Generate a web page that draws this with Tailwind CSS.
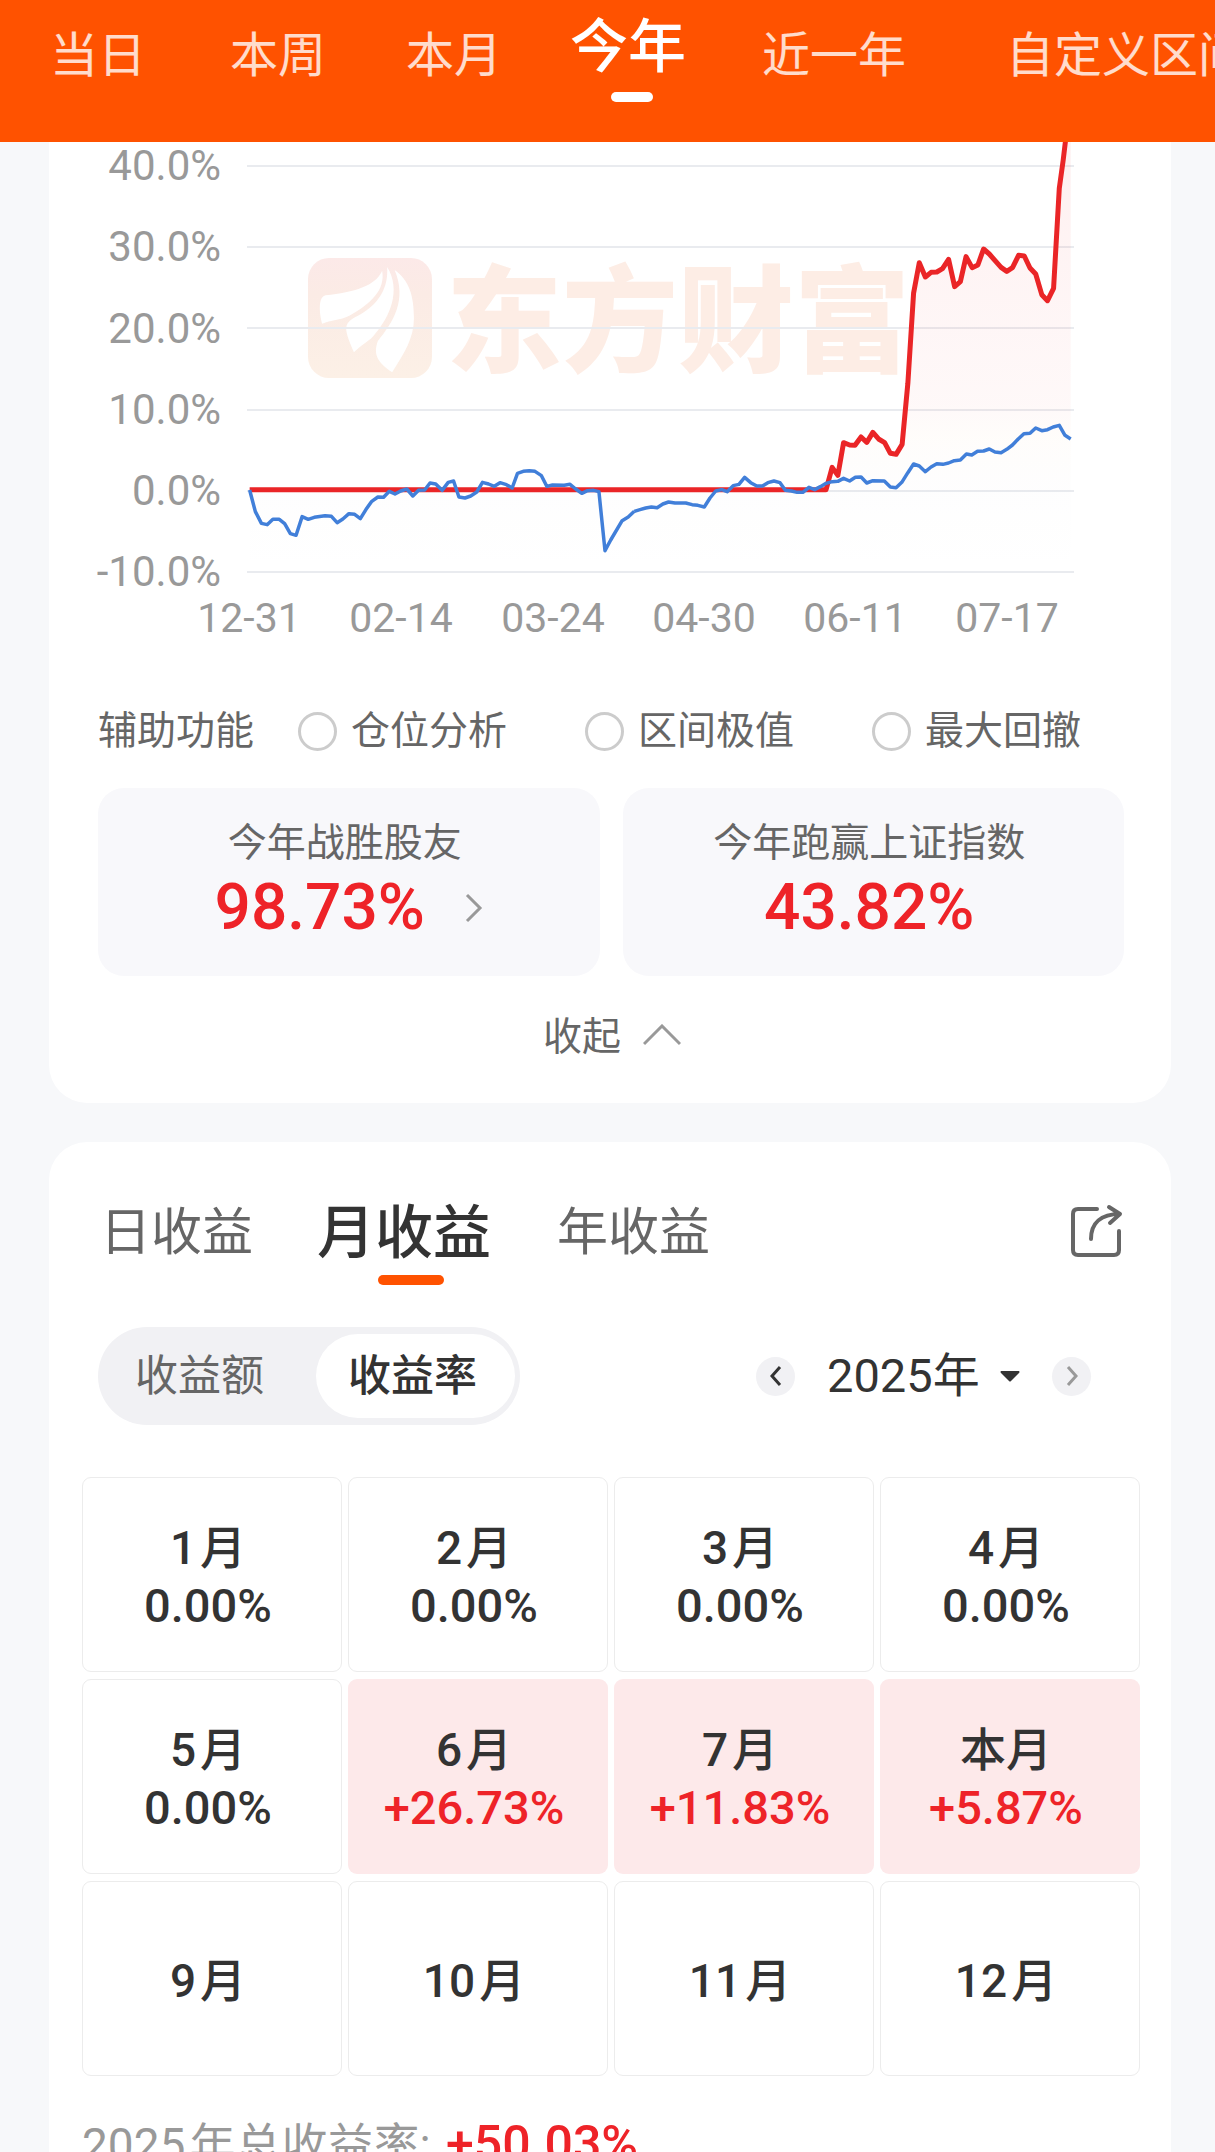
<!DOCTYPE html>
<html lang="zh-CN">
<head>
<meta charset="utf-8">
<meta name="viewport" content="width=device-width, initial-scale=1">
<title>收益分析</title>
<script src="https://cdn.jsdelivr.net/npm/@tailwindcss/browser@4"></script>
</head>
<body class="flex h-screen flex-col overflow-hidden bg-[#f7f8fa] font-[Roboto,'Noto_Sans_CJK_SC',sans-serif] text-[#333]">

<header class="h-[142px] shrink-0 overflow-hidden bg-[#ff5200]">
  <nav class="flex whitespace-nowrap text-[48px] leading-[58px] text-white/80">
    <a href="#" class="mt-[27px] ml-[50px] shrink-0">当日</a>
    <a href="#" class="mt-[27px] ml-21 shrink-0">本周</a>
    <a href="#" class="mt-[27px] ml-20 shrink-0">本月</a>
    <a href="#" aria-current="page" class="mt-[18px] ml-17 flex shrink-0 flex-col items-center text-[58px] font-medium text-white">今年<span class="mt-4 ml-2 h-[10px] w-[42px] rounded-full bg-white"></span></a>
    <a href="#" class="mt-[27px] ml-19 shrink-0">近一年</a>
    <a href="#" class="mt-[27px] ml-25 shrink-0">自定义区间</a>
  </nav>
</header>

<main class="flex-1 overflow-y-auto pr-11 pl-[49px] [scrollbar-width:none]">

  <section class="rounded-b-[38px] bg-white pb-[37px]">
    <svg viewBox="49 142 1122 560" class="block h-auto w-full" role="img" aria-label="今年收益率走势">
      <defs>
        <linearGradient id="area" gradientUnits="userSpaceOnUse" x1="0" y1="0" x2="0" y2="1326">
          <stop offset="0" stop-color="#ee2328" stop-opacity=".07"/>
          <stop offset=".62" stop-color="#ee2328" stop-opacity=".03"/>
          <stop offset=".7" stop-color="#ee8828" stop-opacity=".02"/>
          <stop offset=".85" stop-color="#8888aa" stop-opacity=".01"/>
          <stop offset="1" stop-color="#8888aa" stop-opacity="0"/>
        </linearGradient>
        <linearGradient id="badge" x1="0" y1="0" x2="0" y2="1">
          <stop offset="0" stop-color="#fce9e8"/>
          <stop offset=".3" stop-color="#fbebe5"/>
          <stop offset="1" stop-color="#fcf0e6"/>
        </linearGradient>
      </defs>

      <!-- watermark -->
      <rect x="308" y="258" width="124" height="120" rx="21" fill="url(#badge)"/>
      <g transform="matrix(.35714 0 0 .33333 90 130)" fill="#fff">
        <path d="M818 422C800 468 740 486 660 496C638 500 642 550 650 581C675 570 700 571 726 557C785 522 828 480 818 422Z"/>
        <path d="M832 411C836 470 812 525 742 562C708 582 712 600 739 667C765 640 785 632 798 612C840 560 872 480 832 411Z"/>
        <path d="M853 420C895 452 907 500 907 565C907 625 880 670 846 727C806 697 792 675 806 633C850 575 888 510 853 420Z"/>
      </g>
      <text x="446" y="363" font-size="116" font-weight="900" fill="#fdede5">东方财富</text>

      <!-- grid lines -->
      <path d="M247 166H1074M247 247H1074M247 328H1074M247 410H1074M247 491H1074M247 572H1074" stroke="#e9ebef" stroke-width="2"/>

      <g font-size="42" fill="#999" text-anchor="end">
        <text x="221" y="180">40.0%</text>
        <text x="221" y="261">30.0%</text>
        <text x="221" y="343">20.0%</text>
        <text x="221" y="424">10.0%</text>
        <text x="221" y="505">0.0%</text>
        <text x="221" y="586">-10.0%</text>
      </g>
      <g font-size="41" fill="#999" text-anchor="middle">
        <text x="249" y="632">12-31</text>
        <text x="401" y="632">02-14</text>
        <text x="553" y="632">03-24</text>
        <text x="704" y="632">04-30</text>
        <text x="855" y="632">06-11</text>
        <text x="1007" y="632">07-17</text>
      </g>

      <g transform="matrix(.35714 0 0 .33333 640 130)" fill="none" stroke-linejoin="round">
        <path fill="url(#area)" d="M-1093 1079H521L538 1012L554 1036L570 938L602 946L619 921L635 937L652 907L668 927L685 938L701 970L717 973L734 943L750 760L766 490L782 398L799 441L815 427L831 426L847 416L864 388L881 470L897 455L913 380L930 413L946 405L962 357L978 372L1011 412L1027 424L1043 413L1060 376L1076 378L1092 414L1108 432L1125 494L1141 512L1158 475L1174 175L1185 90L1191 36H1206V1326H-1093Z"/>
        <polyline stroke="#ea2527" stroke-width="5" vector-effect="non-scaling-stroke" points="-1093,1079 521,1079 538,1012 554,1036 570,938 587,945 602,946 619,921 635,937 652,907 668,927 685,938 701,970 717,973 734,943 750,760 766,490 782,398 799,441 815,427 831,426 847,416 864,388 881,470 897,455 913,380 930,413 946,405 962,357 978,372 1011,412 1027,424 1043,413 1060,376 1076,378 1092,414 1108,432 1125,494 1141,512 1158,475 1174,175 1185,90 1191,36 1200,-60"/>
        <polyline stroke="#417fd9" stroke-width="3.5" vector-effect="non-scaling-stroke" points="-16,1144 0,1139 16,1134 32,1131 48,1133 64,1122 80,1116 98,1119 128,1119 146,1124 162,1126 180,1131 196,1104 212,1083 229,1079 244,1085 261,1067 277,1063 293,1042 310,1058 327,1068 343,1068 358,1058 375,1053 392,1058 407,1081 424,1083 440,1087 456,1087 473,1072 489,1079 505,1070 521,1060 538,1055 554,1054 570,1045 587,1053 603,1042 619,1041 635,1059 652,1052 684,1053 701,1071 717,1073 733,1057 750,1028 766,1002 782,1008 799,1025 815,1011 831,1001 848,1003 864,999 880,992 897,990 914,972 929,975 945,964 962,963 978,957 994,966 1011,968 1027,958 1043,945 1059,927 1075,911 1092,910 1108,894 1125,902 1141,899 1157,891 1174,886 1190,916 1206,927"/>
      </g>
      <g transform="matrix(.35714 0 0 .33333 90 130)" fill="none" stroke-linejoin="round">
        <polyline stroke="#417fd9" stroke-width="3.5" vector-effect="non-scaling-stroke" points="447,1080 463,1145 480,1180 496,1184 512,1168 530,1168 545,1181 561,1211 577,1216 594,1160 611,1168 628,1162 658,1157 676,1159 692,1178 708,1167 725,1151 741,1153 757,1166 773,1138 789,1114 806,1101 822,1102 838,1084 854,1092 870,1083 887,1077 904,1098 920,1081 937,1080 952,1059 968,1062 986,1081 1003,1057 1018,1053 1033,1101 1050,1104 1066,1098 1083,1086 1099,1057 1116,1062 1132,1069 1148,1058 1166,1064 1182,1074 1197,1030 1213,1024 1230,1022 1246,1024 1264,1037 1279,1069 1295,1065 1328,1066 1344,1063 1360,1077 1377,1090 1393,1082 1410,1081 1425,1085 1442,1262 1458,1230 1490,1172 1507,1161 1524,1144"/>
      </g>
    </svg>

    <div class="flex items-center pl-[49px] text-[39px] leading-[58px] whitespace-nowrap text-[#666]">
      <span>辅助功能</span>
      <div class="ml-11 flex gap-[78px]">
        <label class="flex items-center gap-[14px]"><input type="radio" name="assist" class="size-[39px] appearance-none rounded-full border-[3px] border-[#ccc] bg-white">仓位分析</label>
        <label class="flex items-center gap-[14px]"><input type="radio" name="assist" class="size-[39px] appearance-none rounded-full border-[3px] border-[#ccc] bg-white">区间极值</label>
        <label class="flex items-center gap-[14px]"><input type="radio" name="assist" class="size-[39px] appearance-none rounded-full border-[3px] border-[#ccc] bg-white">最大回撤</label>
      </div>
    </div>

    <div class="mt-7 grid grid-cols-2 gap-[23px] pr-[47px] pl-[49px]">
      <a href="#" class="flex h-[188px] flex-col items-center rounded-[26px] bg-[#f8f8fb] pt-[26px]">
        <span class="pr-2 text-[39px] leading-[58px] text-[#666]">今年战胜股友</span>
        <span class="flex items-center gap-10 text-[64px] leading-[72px] font-medium text-[#ee2328]">98.73%
          <svg class="h-[30px] w-[18px]" viewBox="0 0 18 30" fill="none" stroke="#999" stroke-width="3"><path d="M2 2L15 15L2 28"/></svg>
        </span>
      </a>
      <div class="flex h-[188px] flex-col items-center rounded-[26px] bg-[#f8f8fb] pt-[26px] pr-2">
        <span class="text-[39px] leading-[58px] text-[#666]">今年跑赢上证指数</span>
        <span class="text-[64px] leading-[72px] font-medium text-[#ee2328]">43.82%</span>
      </div>
    </div>

    <button type="button" class="mx-auto mt-8 flex items-center gap-[22px] pl-1 text-[39px] leading-[58px] text-[#666]">收起
      <svg class="mb-1 h-[22px] w-[38px]" viewBox="0 0 38 22" fill="none" stroke="#999" stroke-width="3"><path d="M1 20L19 2L37 20"/></svg>
    </button>
  </section>

  <section class="mt-[39px] rounded-t-[38px] bg-white pt-[62px] pb-12">
    <div class="flex items-start pr-12 pl-[51px] text-[51px] leading-[58px] text-[#666]">
      <button type="button">日收益</button>
      <button type="button" class="ml-16 flex flex-col items-start text-[58px] font-medium text-[#333]">月收益<span class="mt-[13px] ml-[61px] h-[10px] w-[66px] rounded-full bg-[#ff5200]"></span></button>
      <button type="button" class="ml-[66px]">年收益</button>
      <button type="button" aria-label="分享" class="ml-auto">
        <svg class="size-[54px]" viewBox="0 0 54 54" fill="none" stroke="#666" stroke-width="4" stroke-linecap="round" stroke-linejoin="round"><path d="M28 5H9Q4 5 4 10V46Q4 51 9 51H45Q50 51 50 46V27M22 35C22 19 32 10 51 10M40 3L51 10L41 19"/></svg>
      </button>
    </div>

    <div class="mt-[42px] flex items-center justify-between pr-20 pl-[49px]">
      <div class="flex h-[98px] items-center rounded-full bg-[#f1f1f4] py-[7px] pr-[5px] pl-[37px] text-[43px] leading-[60px] text-[#666]">
        <button type="button">收益额</button>
        <button type="button" class="ml-[52px] h-[84px] rounded-full bg-white pr-[38px] pl-8 font-medium text-[#333]">收益率</button>
      </div>
      <div class="flex items-center">
        <button type="button" aria-label="上一年" class="grid size-[39px] place-items-center rounded-full bg-[#f1f1f4]">
          <svg class="h-5 w-3" viewBox="0 0 12 20" fill="none" stroke="#333" stroke-width="3"><path d="M10 1L2 10L10 19"/></svg>
        </button>
        <label class="ml-8 flex items-center gap-5">
          <select aria-label="年份" class="appearance-none text-[47px] leading-[60px]"><option>2025年</option></select>
          <svg class="h-[11px] w-5" viewBox="0 0 20 11" fill="#333"><path d="M1 0H19Q20 1 19 2L11 10Q10 11 9 10L1 2Q0 1 1 0Z"/></svg>
        </label>
        <button type="button" aria-label="下一年" class="ml-8 grid size-[39px] place-items-center rounded-full bg-[#f1f1f4]">
          <svg class="h-5 w-3" viewBox="0 0 12 20" fill="none" stroke="#999" stroke-width="3"><path d="M2 1L10 10L2 19"/></svg>
        </button>
      </div>
    </div>

    <ul class="mt-[52px] grid auto-rows-[195px] grid-cols-4 gap-x-1.5 gap-y-[7px] pr-[31px] pl-[33px] text-[46px] leading-[58px] font-medium *:flex *:flex-col *:items-center *:justify-center *:rounded-[9px] *:pt-1 *:pr-2">
      <li class="border border-[#ececec]"><span>1<span class="ml-1">月</span></span><span class="text-[47px]">0.00%</span></li>
      <li class="border border-[#ececec]"><span>2<span class="ml-1">月</span></span><span class="text-[47px]">0.00%</span></li>
      <li class="border border-[#ececec]"><span>3<span class="ml-1">月</span></span><span class="text-[47px]">0.00%</span></li>
      <li class="border border-[#ececec]"><span>4<span class="ml-1">月</span></span><span class="text-[47px]">0.00%</span></li>
      <li class="border border-[#ececec]"><span>5<span class="ml-1">月</span></span><span class="text-[47px]">0.00%</span></li>
      <li class="bg-[#fde9ea]"><span>6<span class="ml-1">月</span></span><span class="text-[47px] text-[#ee2328]">+26.73%</span></li>
      <li class="bg-[#fde9ea]"><span>7<span class="ml-1">月</span></span><span class="text-[47px] text-[#ee2328]">+11.83%</span></li>
      <li class="bg-[#fde9ea]"><span>本月</span><span class="text-[47px] text-[#ee2328]">+5.87%</span></li>
      <li class="border border-[#ececec]"><span>9<span class="ml-1">月</span></span></li>
      <li class="border border-[#ececec]"><span>10<span class="ml-1">月</span></span></li>
      <li class="border border-[#ececec]"><span>11<span class="ml-1">月</span></span></li>
      <li class="border border-[#ececec]"><span>12<span class="ml-1">月</span></span></li>
    </ul>

    <p class="mt-[38px] pl-[33px] text-[46px] leading-[60px] text-[#999]">2025<span class="ml-1">年总收益率</span>: <span class="ml-1 text-[50px] font-medium text-[#ee2328]">+50.03%</span></p>
  </section>
</main>
</body>
</html>
